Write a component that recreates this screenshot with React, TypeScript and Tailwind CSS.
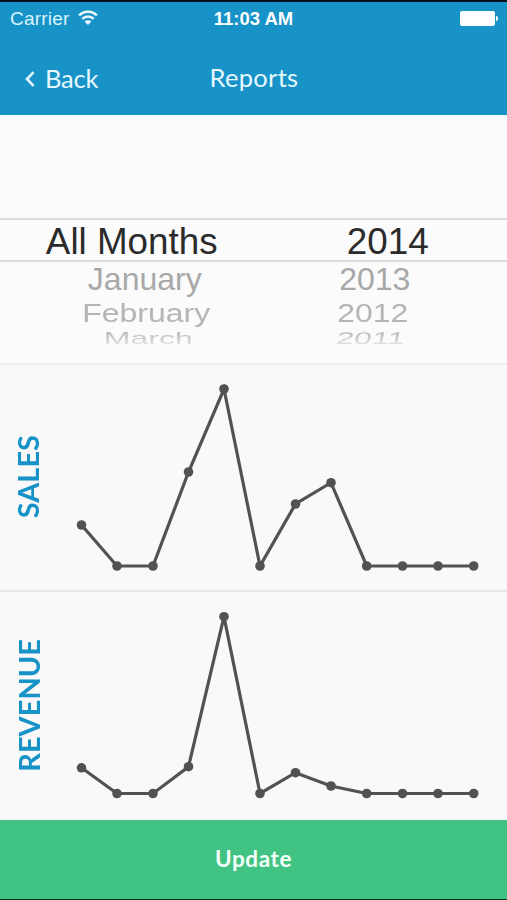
import React from "react";

type Point = [number, number];

const sales: Point[] = [
  [81.5, 525], [117, 566], [153, 566], [188.5, 472], [224, 389], [260, 566],
  [295.5, 504], [331, 482.7], [366.7, 566], [402.5, 566], [438, 566], [473.7, 566],
];

const revenue: Point[] = [
  [81.5, 767.8], [117, 793.5], [153, 793.5], [188.5, 766.7], [224, 616.7], [260, 793.5],
  [295.5, 772.7], [331, 786], [366.7, 793.5], [402.5, 793.5], [438, 793.5], [473.7, 793.5],
];

function Chart({ points, top, height }: { points: Point[]; top: number; height: number }) {
  return (
    <svg className="block shrink-0" width="447" height={height} viewBox={`60 ${top} 447 ${height}`}>
      <polyline
        points={points.map((p) => p.join(",")).join(" ")}
        fill="none"
        stroke="#525252"
        strokeWidth="3.2"
      />
      {points.map(([x, y]) => (
        <circle key={x} cx={x} cy={y} r="4.8" fill="#525252" />
      ))}
    </svg>
  );
}

function StatusBar() {
  return (
    <div className="grid h-[33px] grid-cols-3 items-center font-['Liberation_Sans',sans-serif] text-white">
      <div className="flex items-center pl-[10px]">
        <span className="w-[60px] text-[19px] leading-none tracking-[0.2px] text-[#d9f2fb]">Carrier</span>
        <svg className="-mt-[2px] ml-[8px]" width="20" height="16" viewBox="0 0 20 16" fill="none" stroke="#e9f9ff" strokeWidth="2.5">
          <path d="M1.1 5.4C6 .4 14 .4 18.9 5.4" />
          <path d="M4.3 8.9C7.5 5.8 12.5 5.8 15.7 8.9" />
          <path d="M10 15L6.6 11.6C8.5 9.8 11.5 9.8 13.4 11.6Z" fill="#e9f9ff" stroke="none" />
        </svg>
      </div>
      <span className="pt-px text-center text-[18.5px] leading-none font-bold whitespace-nowrap">11:03 AM</span>
      <div className="flex items-center justify-end pr-[9px]">
        <span className="h-[15px] w-[35px] rounded-[2px] bg-white" />
        <span className="ml-px h-[5px] w-[2.5px] rounded-r-full bg-white" />
      </div>
    </div>
  );
}

function NavBar() {
  return (
    <div className="grid h-[80px] grid-cols-3 items-start pt-[26px] font-['Lato',sans-serif] text-[25.5px] leading-[34px] text-[#e6f8ff]">
      <div className="flex items-center pl-[25px]">
        <svg className="mt-[2px]" width="10" height="16" viewBox="0 0 10 16" fill="none" stroke="#e6f8ff" strokeWidth="2.6">
          <path d="M8.6 1.2L2 8L8.6 14.8" />
        </svg>
        <span className="ml-[10px] tracking-[-0.2px]">Back</span>
      </div>
      <span className="-mt-px pl-px text-center tracking-[0.3px]">Reports</span>
    </div>
  );
}

function Picker() {
  return (
    <div className="flex h-[250px] flex-col border-b-2 border-[#ececec] bg-[#fbfbfb] pt-[103px] font-['Liberation_Sans',sans-serif] text-[32px] whitespace-nowrap">
      <div className="grid h-[44px] grid-cols-2 border-y-2 border-[#dcdcdc] text-center text-[36.8px] leading-[43px] text-[#2b2b2b]">
        <span className="pl-[10px]">All Months</span>
        <span className="pl-[15px]">2014</span>
      </div>
      <div className="grid h-[36px] grid-cols-2 text-center leading-[35px] text-[#a8a8a8]">
        <span className="pl-[36px]">January</span>
        <span className="pr-[11px]">2013</span>
      </div>
      <div className="grid h-[30px] grid-cols-2 text-center leading-[30px] text-[#b5b5b5]">
        <span className="scale-y-[0.78] pl-[39px]">February</span>
        <span className="scale-y-[0.78] pr-[15px]">2012</span>
      </div>
      <div className="grid h-[22px] grid-cols-2 text-center leading-[20px] text-[#bdbdbd] [mask-image:linear-gradient(to_bottom,#000_25%,rgba(0,0,0,0.35)_80%)]">
        <span className="scale-y-[0.53] pl-[43px]">March</span>
        <span className="scale-y-[0.53] -skew-x-6 pr-[20px]">2011</span>
      </div>
    </div>
  );
}

function SideLabel({ children, className }: { children: string; className: string }) {
  return (
    <div className={`flex w-[60px] shrink-0 items-center justify-center ${className}`}>
      <span className="rotate-180 font-['Lato',sans-serif] text-[29px] leading-none font-bold text-[#1793c8] [writing-mode:vertical-rl]">
        {children}
      </span>
    </div>
  );
}

export default function App() {
  return (
    <div className="flex h-[900px] w-[507px] flex-col overflow-hidden bg-[#f9f9f9]">
      <header className="h-[115px] shrink-0 border-t-2 border-[#02111c] bg-[#1793c8]">
        <StatusBar />
        <NavBar />
      </header>
      <Picker />
      <section className="flex h-[227px] shrink-0 border-b-2 border-[#e6e6e6]">
        <SideLabel className="pr-[6px] pb-[2px]">SALES</SideLabel>
        <Chart points={sales} top={365} height={225} />
      </section>
      <section className="flex h-[228px] shrink-0">
        <SideLabel className="pr-[4px] pb-[2px]">REVENUE</SideLabel>
        <Chart points={revenue} top={592} height={228} />
      </section>
      <button className="h-[80px] shrink-0 border-b border-[#06351e] bg-[#41c483] pb-[2px] font-['Lato',sans-serif] text-[22.5px] font-bold tracking-[0.6px] text-[#f4fff9]">
        Update
      </button>
    </div>
  );
}
